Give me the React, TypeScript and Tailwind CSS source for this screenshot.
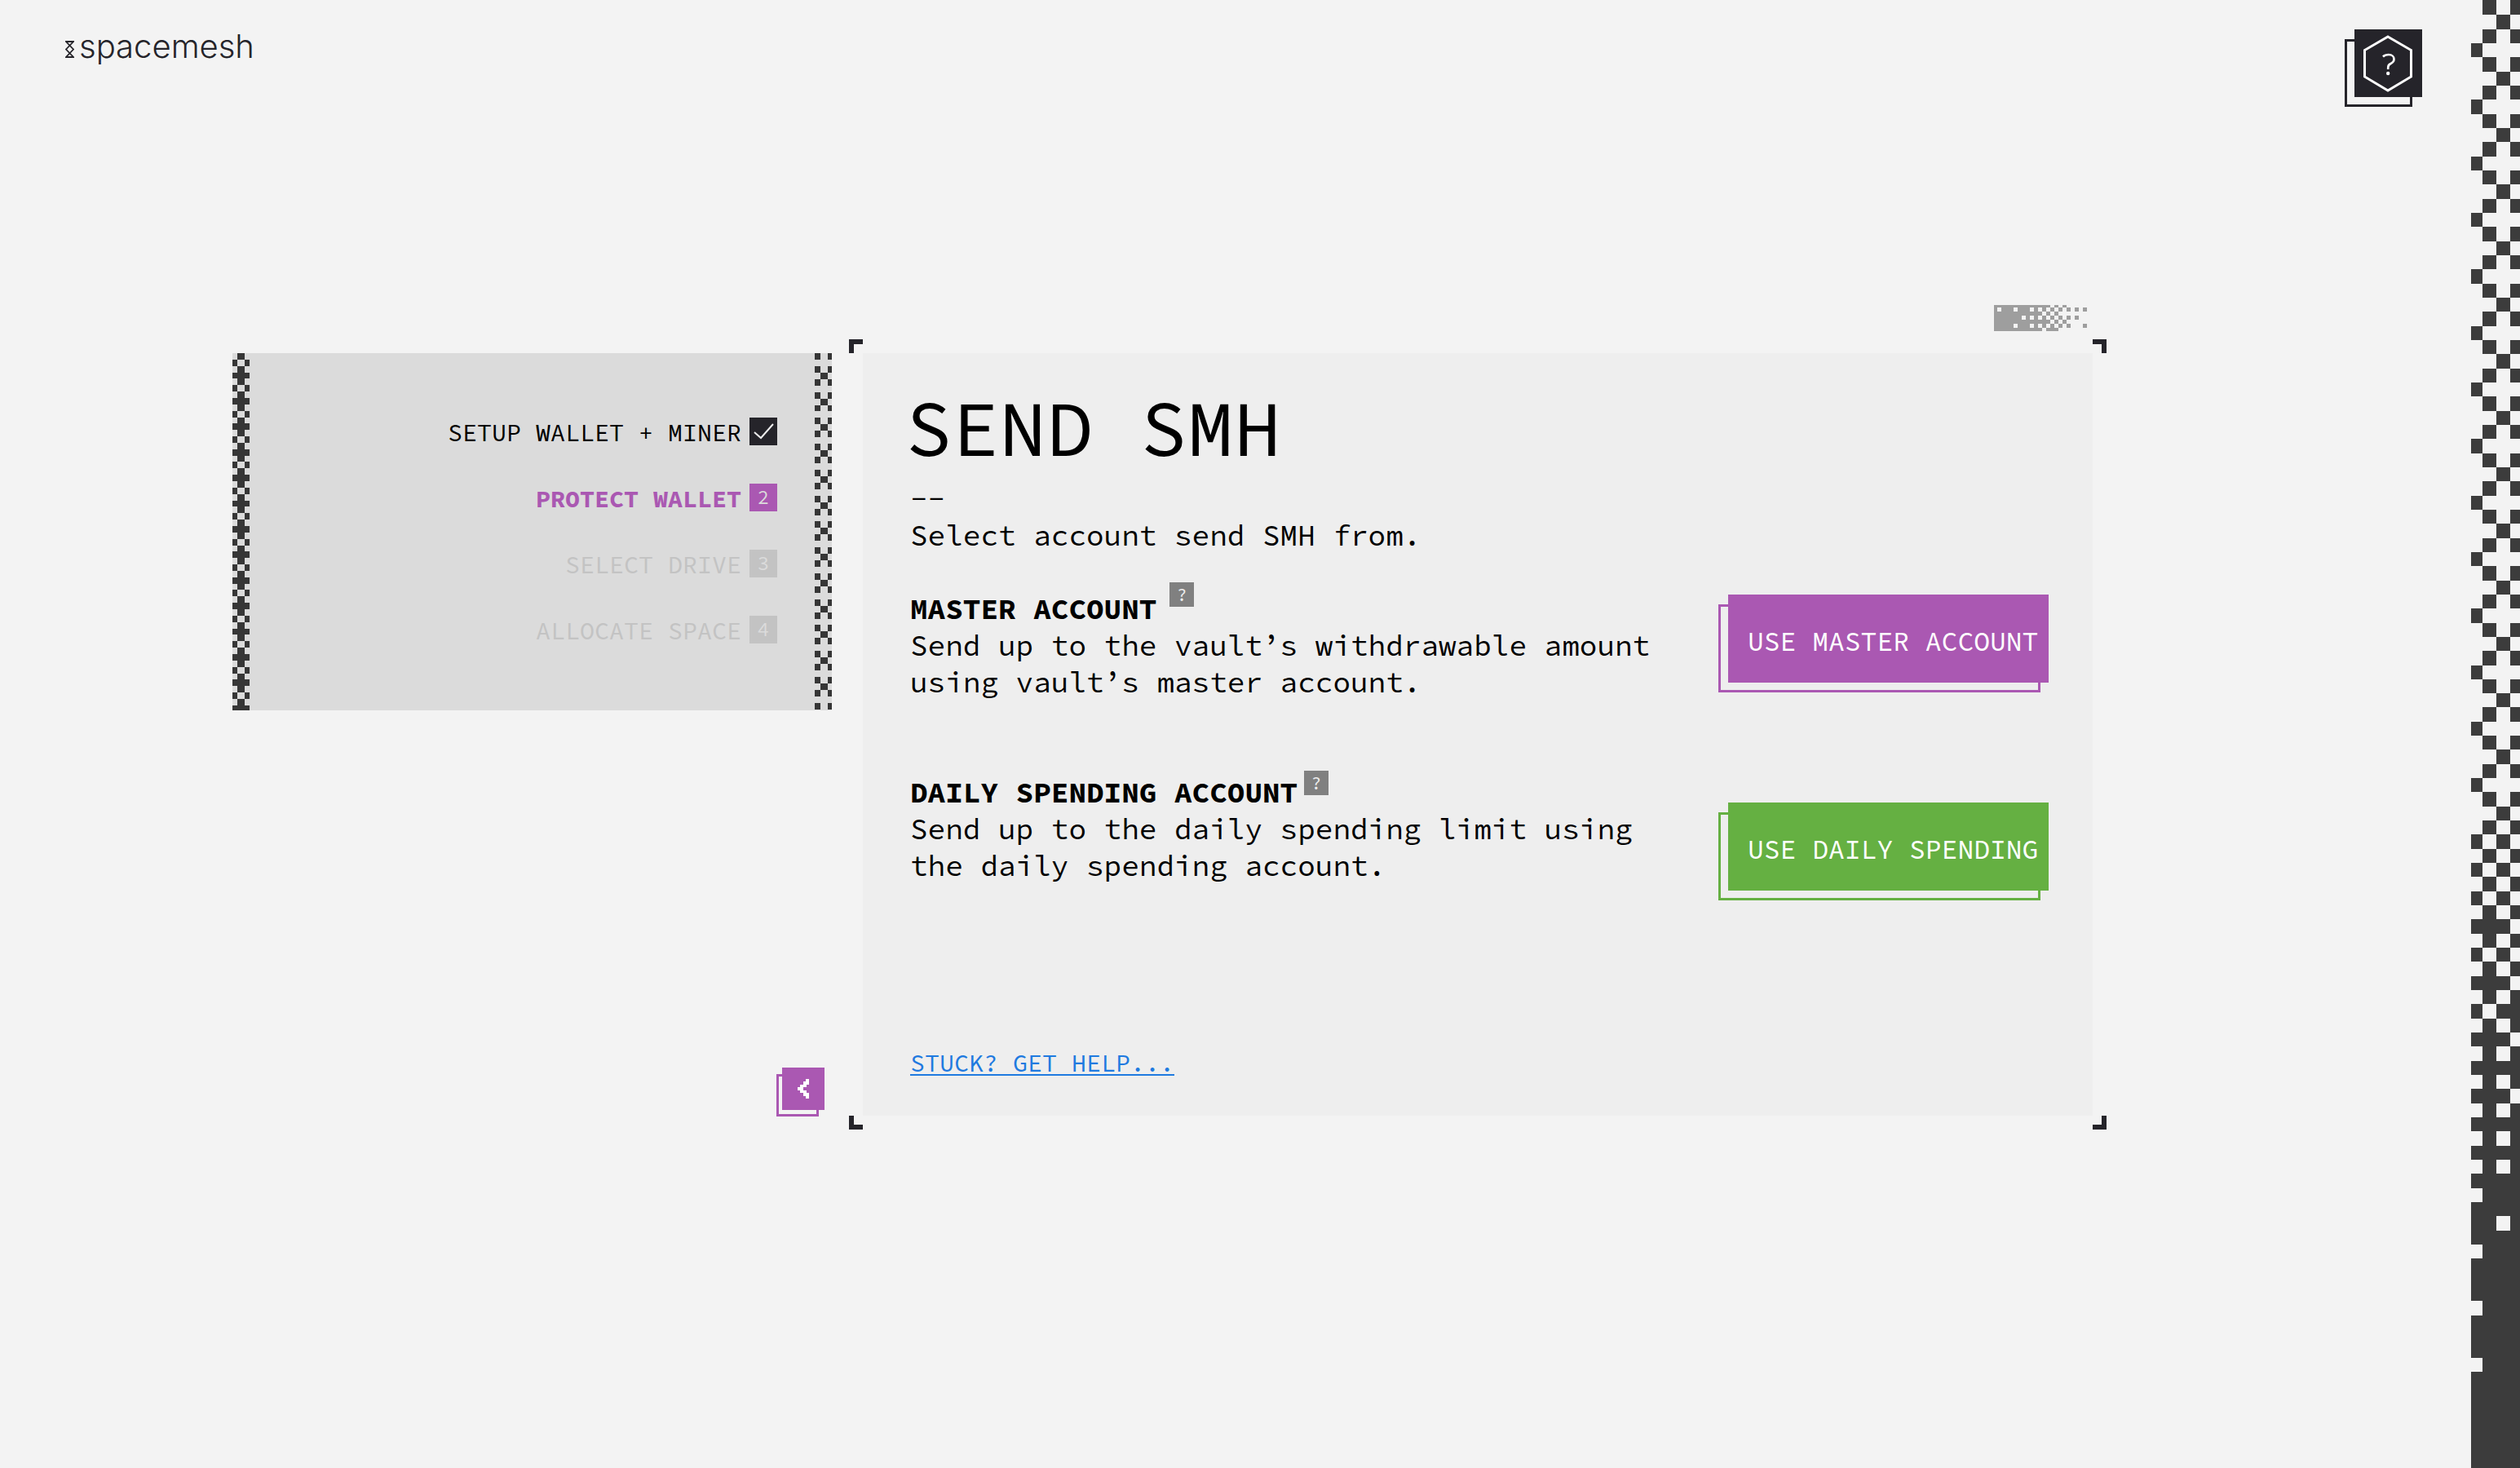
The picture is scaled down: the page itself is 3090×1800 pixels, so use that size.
import type { ReactNode } from 'react';

/** Draws rows of '#' and '.' as filled cells; xs and y(i) give the cell edges. */
function PixelArt({
  rows,
  xs,
  y,
  width,
  height,
  className,
}: {
  rows: string[];
  xs: number[];
  y: (i: number) => number;
  width: number;
  height: number;
  className: string;
}) {
  let d = '';
  rows.forEach((row, r) => {
    for (let c = 0; c < row.length; c++) {
      if (row[c] !== '#') continue;
      const y0 = Math.round(y(r));
      const y1 = Math.round(y(r + 1));
      d += `M${xs[c]} ${y0}H${xs[c + 1]}V${y1}H${xs[c]}Z`;
    }
  });
  return (
    <svg
      aria-hidden="true"
      viewBox={`0 0 ${width} ${height}`}
      preserveAspectRatio="none"
      shapeRendering="crispEdges"
      className={className}
    >
      <path d={d} fill="currentColor" />
    </svg>
  );
}

const range = (n: number) => Array.from({ length: n }, (_, i) => i);

const CALM = ['.#.#', '..#.', '.#.#', '#...'];
const DENSE = [
  '.#.#', '..#.', '.#.#', '#.#.', '.#.#', '#.#.', '.#.#', '#.#.', '.#.#', '###.',
  '.#.#', '#.#.', '.#.#', '###.', '.#.#', '#.##', '.#.#', '###.', '.#.#', '####',
  '.#.#', '###.', '.#.#', '####', '.#.#', '####', '.#.#', '####', '.###', '####',
  '##.#', '####', '.###', '####', '####', '####', '.###', '####', '####', '####',
  '.###', '####', '####', '####', '####', '####', '####', '####',
];
const EDGE_ROWS = [...range(56).map((i) => CALM[i % 4]), ...DENSE];

const LEFT_ROWS = range(56).map((i) => ['.#.', '#.#', '.#.', '###'][i % 4]);
const RIGHT_ROWS = range(55).map((i) => ['#.#', '...', '#.#', '.#.'][i % 4]);

const FADE_ROWS = [
  '##############.#.#.....',
  '#.###.###.#.#.#.#.#.#.#',
  '############.#.#.......',
  '#######.#.#.#.#.#.#.#..',
  '##############.#.#.....',
  '#####.###.#.#.#.#.#...#',
  '############.###.......',
];
const FADE_X = range(24).map((i) => (i === 0 ? 0 : i * 5 - 1));
const FADE_Y = [0, 3, 8, 13, 18, 23, 28, 32];

function OffsetButton({
  className,
  children,
  label,
}: {
  className: string;
  children: ReactNode;
  label?: string;
}) {
  return (
    <button
      type="button"
      aria-label={label}
      className={`relative shrink-0 cursor-pointer before:absolute before:-z-10 before:border-3 before:content-[''] ${className}`}
    >
      {children}
    </button>
  );
}

function HelpBadge({ label, className }: { label: string; className: string }) {
  return (
    <button
      type="button"
      aria-label={label}
      className={`flex h-[30px] w-[30px] cursor-pointer items-center justify-center bg-[#808080] text-[22px] leading-none font-normal text-[#eeeeee] ${className}`}
    >
      ?
    </button>
  );
}

const STEPS = [
  { name: 'SETUP WALLET + MINER', text: 'text-black', box: 'bg-[#25242a] text-[#eeeeee]' },
  { name: 'PROTECT WALLET', text: 'font-bold text-[#aa58b2]', box: 'bg-[#aa58b2] text-[#dbdbdb]' },
  { name: 'SELECT DRIVE', text: 'text-[#c3c3c3]', box: 'bg-[#c3c3c3] text-[#dbdbdb]' },
  { name: 'ALLOCATE SPACE', text: 'text-[#c3c3c3]', box: 'bg-[#c3c3c3] text-[#dbdbdb]' },
];

function Steps() {
  return (
    <nav aria-label="Setup steps" className="flex w-full justify-between bg-[#dbdbdb]">
      <PixelArt
        rows={LEFT_ROWS}
        xs={[0, 6, 15, 21]}
        y={(i) => i * 7.85}
        width={21}
        height={438}
        className="h-[438px] w-[21px] text-[#363636]"
      />
      <div className="flex">
        <ol className="flex flex-col items-end gap-[47px] pt-[79px] pr-[46px]">
          {STEPS.map((s, i) => (
            <li key={s.name} className="flex h-[34px] items-center gap-[10px]">
              <span className={`pt-[2px] text-[30px] leading-none whitespace-nowrap ${s.text}`}>{s.name}</span>
              <span className={`flex h-[34px] w-[34px] items-center justify-center text-[24px] leading-none ${s.box}`}>
                {i === 0 ? (
                  <svg aria-label="Done" viewBox="0 0 34 34" className="h-[34px] w-[34px]">
                    <path d="M6 18L14 25L29 8" fill="none" stroke="currentColor" strokeWidth="2" />
                  </svg>
                ) : (
                  i + 1
                )}
              </span>
            </li>
          ))}
        </ol>
        <PixelArt
          rows={RIGHT_ROWS}
          xs={[0, 7, 16, 21]}
          y={(i) => i * 7.94}
          width={21}
          height={438}
          className="h-[438px] w-[21px] text-[#363636]"
        />
      </div>
    </nav>
  );
}

function Corners() {
  return (
    <>
      <span className="absolute -top-[17px] -left-[17px] h-[17px] w-[17px] border-t-6 border-l-6 border-[#25242a]" />
      <span className="absolute -top-[17px] -right-[17px] h-[17px] w-[17px] border-t-6 border-r-6 border-[#25242a]" />
      <span className="absolute -bottom-[17px] -left-[17px] h-[17px] w-[17px] border-b-6 border-l-6 border-[#25242a]" />
      <span className="absolute -right-[17px] -bottom-[17px] h-[17px] w-[17px] border-r-6 border-b-6 border-[#25242a]" />
    </>
  );
}

export default function App() {
  return (
    <div className="isolate flex min-h-screen bg-[#f3f3f3] font-['Source_Code_Pro','Liberation_Mono',monospace] text-black">
      <div className="min-w-0 flex-1">
        <header className="flex items-start justify-between pt-9 pr-[60px] pl-20">
          <div className="flex items-center gap-[6px] text-[#25242a]">
            <svg aria-hidden="true" viewBox="0 0 11 21" className="mt-[6px] h-[21px] w-[11px]">
              <path d="M1 1H10L1 10.5L10 20H1L10 10.5Z" fill="none" stroke="currentColor" strokeWidth="1.8" />
            </svg>
            <span className="font-['Inter',sans-serif] text-[40px] leading-[42px] font-light">spacemesh</span>
          </div>
          <OffsetButton
            label="Help"
            className="flex h-[83px] w-[83px] items-center justify-center bg-[#25242a] text-white before:top-3 before:right-3 before:-bottom-3 before:-left-3 before:border-[#25242a]"
          >
            <svg aria-hidden="true" viewBox="0 0 83 83" className="h-[83px] w-[83px]">
              <path d="M41 9L69.500 25.500V58L41 75L12.500 58V25.500Z" fill="none" stroke="currentColor" strokeWidth="3" />
              <path
                d="M35 33.500C37 31.500 39 31 42 31C46 31 48.500 33.500 48.500 36.500C48.500 39.500 46.500 41 44.500 42C42 43 41.200 44.500 41.200 47V49"
                fill="none"
                stroke="currentColor"
                strokeWidth="2.600"
              />
              <circle cx="41.200" cy="54" r="2.200" fill="currentColor" />
            </svg>
          </OffsetButton>
        </header>

        <main className="grid grid-cols-[735px_minmax(0,1fr)] gap-x-[38px] gap-y-[27px] pt-[255px] pr-[464px] pb-20 pl-[285px]">
          <PixelArt
            rows={FADE_ROWS}
            xs={FADE_X}
            y={(i) => FADE_Y[i]}
            width={114}
            height={32}
            className="col-start-2 mr-[7px] h-[32px] w-[114px] justify-self-end text-[#9e9e9e]"
          />

          <div className="col-start-1 flex flex-col items-end justify-between">
            <Steps />
            <div className="pr-[9px] pb-[7px]">
              <OffsetButton
                label="Back"
                className="flex h-[52px] w-[52px] items-center justify-center bg-[#aa58b2] text-white before:top-2 before:right-[7px] before:-bottom-2 before:-left-[7px] before:border-[#aa58b2]"
              >
                <svg aria-hidden="true" viewBox="0 0 52 52" shapeRendering="crispEdges" className="h-[52px] w-[52px]">
                  <path
                    d="M29 14H33V21H30V24H26V28H30V31H33V38H29V35H26V31H22V28H19V24H22V21H26V17H29Z"
                    fill="currentColor"
                  />
                </svg>
              </OffsetButton>
            </div>
          </div>

          <section className="relative isolate flex min-h-[935px] flex-col bg-[#eeeeee] pt-[44px] pr-[54px] pb-[45px] pl-[58px] text-[36px] leading-[45px]">
            <Corners />
            <h1 className="mb-4 -ml-1.5 text-[96px] leading-none">SEND SMH</h1>
            <p>--</p>
            <p>Select account send SMH from.</p>

            <div className="mt-[45px] mb-20 flex items-start justify-between">
              <div className="flex max-w-[960px] flex-col gap-[90px]">
                <div>
                  <h2 className="flex h-[45px] items-start font-bold">
                    MASTER ACCOUNT
                    <HelpBadge label="About the master account" className="-mt-[10px] ml-4" />
                  </h2>
                  <p>Send up to the vault’s withdrawable amount using vault’s master account.</p>
                </div>
                <div>
                  <h2 className="flex h-[45px] items-start font-bold">
                    DAILY SPENDING ACCOUNT
                    <HelpBadge label="About the daily spending account" className="-mt-1 ml-2" />
                  </h2>
                  <p>Send up to the daily spending limit using the daily spending account.</p>
                </div>
              </div>
              <div className="flex flex-col gap-[147px] pt-[5px]">
                <OffsetButton className="h-[108px] w-[393px] bg-[#aa58b2] pt-1.5 pl-6 text-left text-[33px] whitespace-nowrap text-white before:top-3 before:right-[10px] before:-bottom-3 before:-left-3 before:border-[#aa58b2]">
                  USE MASTER ACCOUNT
                </OffsetButton>
                <OffsetButton className="h-[108px] w-[393px] bg-[#65b042] pt-1.5 pl-6 text-left text-[33px] whitespace-nowrap text-white before:top-3 before:right-[10px] before:-bottom-3 before:-left-3 before:border-[#65b042]">
                  USE DAILY SPENDING
                </OffsetButton>
              </div>
            </div>

            <a
              href="#help"
              className="mt-auto self-start text-[30px] leading-[40px] text-[#1f7ae0] underline decoration-2 underline-offset-3"
            >
              STUCK? GET HELP...
            </a>
          </section>
        </main>
      </div>

      <aside aria-hidden="true" className="w-[60px] shrink-0">
        <PixelArt
          rows={EDGE_ROWS}
          xs={[0, 14, 31, 48, 60]}
          y={(i) => (i === 0 ? 0 : i * 17.33 + 1)}
          width={60}
          height={1800}
          className="h-full min-h-screen w-[60px] text-[#3c3c3c]"
        />
      </aside>
    </div>
  );
}
